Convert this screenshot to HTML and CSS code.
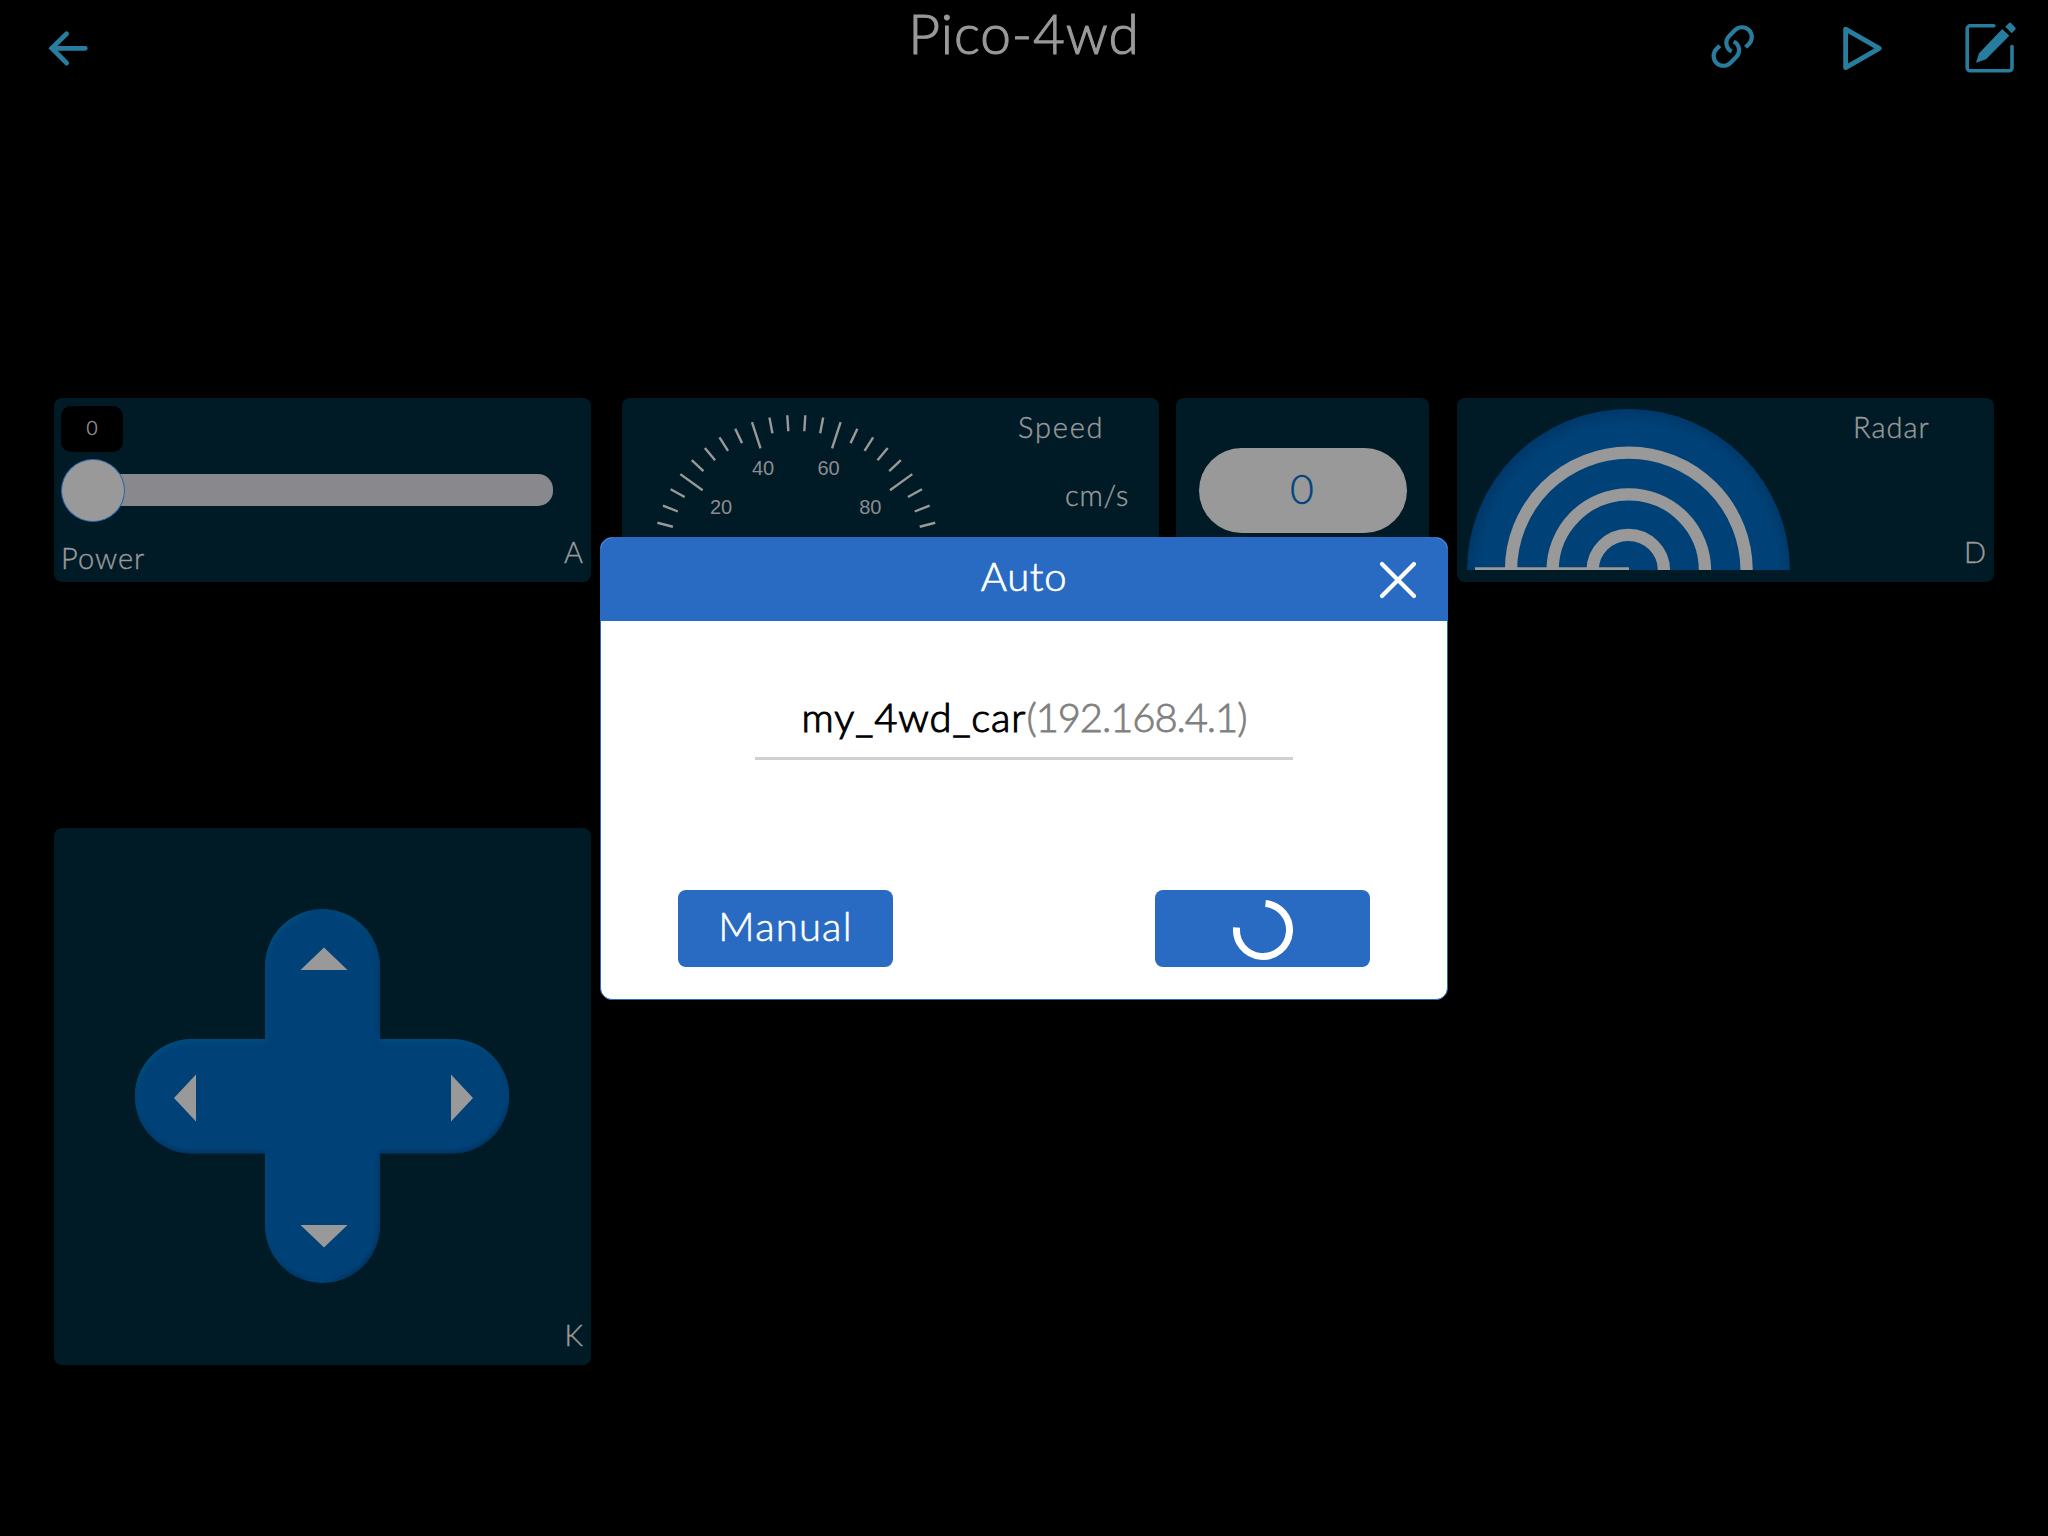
FILE: index.html
```html
<!DOCTYPE html>
<html lang="en">
<head>
<meta charset="utf-8">
<title>Pico-4wd</title>
<link rel="stylesheet" href="styles.css">
</head>
<body>
<header class="topbar">
  <svg class="icon" viewBox="0 0 52 52"><path d="M23.6 12.7 8.8 27.3 23.6 42M8.8 27.3H42.3" stroke-width="4.8" stroke-linecap="round"/></svg>
  <h1 class="title">Pico-4wd</h1>
  <nav class="actions">
    <svg class="icon" viewBox="0 0 52 52"><path d="M36.6 26.2 39.9 22.9A9.7 9.7 0 0 0 26.1 9.1L20.4 14.8A9.7 9.7 0 0 0 22.7 30.5M10.8 24.8 7.5 28.1A9.7 9.7 0 0 0 21.3 41.9L27 36.2A9.7 9.7 0 0 0 24.7 20.5" stroke-width="4.2"/></svg>
    <svg class="icon" viewBox="0 0 52 52"><path d="M8.6 8.2V46.7L42.3 27.4Z" stroke-width="4.8" stroke-linejoin="round"/></svg>
    <svg class="icon" viewBox="0 0 52 52"><path d="M28.8 4.8H5.2a3 3 0 0 0-3 3V46.8a3 3 0 0 0 3 3H44a3 3 0 0 0 3-3V25.5" stroke-width="3.6" stroke-linecap="round"/><path class="solid" d="M37.3 8 44.3 14.7 21 38.3 11 41.7 14 32.3ZM40.3 5.7 43.8 2.2Q45 1 46.2 2.2L50.2 6.4Q51.4 7.6 50.2 8.8L46.7 12.2Z"/></svg>
  </nav>
</header>

<main class="board">
  <section class="card power">
    <output class="badge">0</output>
    <div class="slider"><i class="track"></i><i class="knob"></i></div>
    <span class="label name">Power</span>
    <span class="label key">A</span>
  </section>

  <section class="card speed">
    <svg class="gauge" viewBox="0 0 350 184">
      <g class="ticks" transform="translate(174.300 160.400)">
        <path d="M0-143.4V-127.4" transform="rotate(-75.6)"/><path d="M0-143.4V-127.4" transform="rotate(-68.4)"/><path d="M0-143.4V-127.4" transform="rotate(-61.2)"/><path d="M0-143.4V-115.8" transform="rotate(-54)"/><path d="M0-143.4V-127.4" transform="rotate(-46.8)"/><path d="M0-143.4V-127.4" transform="rotate(-39.6)"/><path d="M0-143.4V-127.4" transform="rotate(-32.4)"/><path d="M0-143.4V-127.4" transform="rotate(-25.2)"/><path d="M0-143.4V-115.8" transform="rotate(-18)"/><path d="M0-143.4V-127.4" transform="rotate(-10.8)"/><path d="M0-143.4V-127.4" transform="rotate(-3.6)"/><path d="M0-143.4V-127.4" transform="rotate(3.6)"/><path d="M0-143.4V-127.4" transform="rotate(10.8)"/><path d="M0-143.4V-115.8" transform="rotate(18)"/><path d="M0-143.4V-127.4" transform="rotate(25.2)"/><path d="M0-143.4V-127.4" transform="rotate(32.4)"/><path d="M0-143.4V-127.4" transform="rotate(39.6)"/><path d="M0-143.4V-127.4" transform="rotate(46.8)"/><path d="M0-143.4V-115.8" transform="rotate(54)"/><path d="M0-143.4V-127.4" transform="rotate(61.2)"/><path d="M0-143.4V-127.4" transform="rotate(68.4)"/><path d="M0-143.4V-127.4" transform="rotate(75.6)"/>
      </g>
      <g class="marks">
        <text x="99" y="115.500">20</text><text x="141" y="76.500">40</text><text x="206.600" y="76.500">60</text><text x="248.300" y="115.500">80</text>
      </g>
    </svg>
    <div class="captions">
      <span class="label cap-name">Speed</span>
      <span class="label cap-unit">cm/s</span>
    </div>
  </section>

  <section class="card value"><output class="pill">0</output></section>

  <section class="card radar">
    <svg class="dome" viewBox="0 0 323 161">
      <defs><radialGradient id="domeFill" gradientUnits="userSpaceOnUse" cx="163" cy="163" r="163"><stop offset=".9" stop-color="#004278"/><stop offset="1" stop-color="#00386a"/></radialGradient></defs>
      <circle cx="161.5" cy="161.5" r="161.5" fill="url(#domeFill)"/>
      <g class="rings"><circle cx="161.8" cy="161.5" r="117.8"/><circle cx="161.8" cy="161.5" r="76.2"/><circle cx="161.3" cy="161.5" r="35.7"/></g>
      <path class="sweep" d="M8 158.2H162V161H8Z"/>
    </svg>
    <span class="label cap-name">Radar</span>
    <span class="label key">D</span>
  </section>

  <section class="card pad">
    <svg class="cross" viewBox="0 0 374 374">
      <defs>
        <filter id="bevel" x="0" y="0" width="1" height="1" color-interpolation-filters="sRGB">
          <feComponentTransfer in="SourceAlpha" result="inv"><feFuncA type="linear" slope="-1" intercept="1"/></feComponentTransfer>
          <feGaussianBlur in="inv" stdDeviation="2.5" result="b"/>
          <feOffset in="b" dx="-1" dy="-2" result="lo"/>
          <feOffset in="b" dx="1" dy="2" result="hi"/>
          <feFlood flood-color="#002850" flood-opacity=".7"/><feComposite in2="lo" operator="in" result="dark"/><feComposite in="dark" in2="SourceAlpha" operator="in" result="dark2"/>
          <feFlood flood-color="#005a85" flood-opacity=".7"/><feComposite in2="hi" operator="in" result="light"/><feComposite in="light" in2="SourceAlpha" operator="in" result="light2"/>
          <feMerge><feMergeNode in="SourceGraphic"/><feMergeNode in="light2"/><feMergeNode in="dark2"/></feMerge>
        </filter>
      </defs>
      <path filter="url(#bevel)" fill="#004278" d="M130 57.500A57.500 57.500 0 0 1 245 57.500V130H317A57.200 57.200 0 0 1 317 244.500H245V316.500A57.500 57.500 0 0 1 130 316.500V244.500H57A57.200 57.200 0 0 1 57 130H130Z"/>
      <path fill="#999" d="M189 38.500 212.500 61H165.500ZM39 189 61 165.500V212.500ZM338 189 316 165.500V212.500ZM189 338.500 212.500 316H165.500Z"/>
    </svg>
    <span class="label key">K</span>
  </section>
</main>

<div class="dialog" role="dialog">
  <div class="dialog-head">
    <h2 class="dialog-title">Auto</h2>
    <svg class="close" viewBox="0 0 40 40"><path d="M4 4 36 36M36 4 4 36"/></svg>
  </div>
  <div class="dialog-body">
    <div class="device"><span class="device-name">my_4wd_car</span><span class="device-ip">(192.168.4.1)</span></div>
    <div class="buttons">
      <button class="btn"><span class="btn-text">Manual</span></button>
      <button class="btn"><svg class="spinner" viewBox="0 0 60 60"><path d="M32.500 3.600A26.500 26.500 0 1 1 3.600 27.500"/></svg></button>
    </div>
  </div>
</div>
</body>
</html>
```
FILE: styles.css
```css
* { box-sizing: border-box; margin: 0; padding: 0; }
body {
  width: 2048px; height: 1536px; overflow: hidden; background: #000; color: #999;
  font-family: Lato, "Open Sans", sans-serif; font-weight: 300; position: relative;
  -webkit-text-stroke: 0.4px currentColor;
}
svg { display: block; }
.topbar { display: grid; grid-template-columns: 1fr auto 1fr; height: 398px; padding: 0 31px 0 43px; align-items: start; }
.icon { width: 52px; height: 52px; margin-top: 21px; fill: none; stroke: #267d9e; }
.icon .solid { fill: #267d9e; stroke: none; }
.title { font-size: 55px; line-height: 67px; font-weight: 300; letter-spacing: 0.9px; margin-left: -12px; -webkit-text-stroke-width: 1.1px; }
.actions { display: flex; gap: 76px; justify-content: flex-end; }

.board { display: grid; grid-template-columns: 537px 537px 253px 537px; grid-template-rows: 184px 537px; row-gap: 246px; padding-left: 54px; }
.card { background: #001a26; border-radius: 8px; height: 100%; }
.speed { margin-left: 31px; width: 537px; }
.value { margin-left: 48px; width: 253px; }
.radar { margin-left: 76px; width: 537px; }
.label { font-size: 29px; line-height: 36px; letter-spacing: 1px; }
.key { letter-spacing: 0; }

.power { display: grid; grid-template-columns: 1fr auto; grid-template-rows: 61px 63px 1fr; padding: 0 8px 0 7px; }
.badge { width: 62px; height: 46px; margin-top: 8px; border-radius: 10px; background: #000; font-size: 19px; line-height: 43px; text-align: center; }
.slider { grid-row: 2; grid-column: 1 / 3; display: flex; align-items: flex-start; }
.track { order: 2; width: 460px; height: 32px; margin: 15px 0 0 -32px; border-radius: 15px; background: #89898d; }
.knob { order: 1; width: 64px; height: 63px; border-radius: 50%; background: #999; border: 1px solid #2564ad; position: relative; z-index: 1; }
.power .name { grid-row: 3; padding-top: 18px; }
.power .key { grid-row: 3; padding-top: 12px; }

.speed, .radar { display: flex; }
.gauge { width: 350px; height: 184px; }
.ticks { stroke: #999; stroke-width: 2.4; }
.marks { fill: #8a8d90; font: 20px "Liberation Sans", sans-serif; text-anchor: middle; -webkit-text-stroke-width: 0; }
.captions { display: flex; flex-direction: column; flex: 1; padding-top: 11px; }
.speed .cap-name { padding-left: 46px; letter-spacing: 1.8px; }
.speed .cap-unit { padding-left: 93px; margin-top: 32px; letter-spacing: 0.8px; }

.value { display: flex; justify-content: center; padding-top: 50px; }
.pill { width: 208px; height: 85px; margin-right: -1px; padding-right: 2px; border-radius: 43px; background: #999; color: #004480; text-align: center; font-size: 41px; line-height: 82px; }

.dome { width: 323px; height: 161px; margin: 11px 0 0 10px; }
.rings { fill: none; stroke: #999; stroke-width: 12.3; }
.sweep { fill: #999; }
.radar .cap-name { margin: 11px auto 0 63px; }
.radar .key { align-self: flex-end; margin: 0 8px 12px 0; }

.pad { display: flex; justify-content: space-between; }
.cross { width: 374px; height: 374px; margin: 81px 0 0 81px; }
.pad .key { align-self: flex-end; margin: 0 8px 12px 0; }

.dialog {
  position: absolute; left: 600px; top: 537px; width: 848px; height: 463px;
  background: #fff; border: 1px solid #2a6cc3; border-radius: 12px; overflow: hidden;
}
.dialog-head { display: grid; grid-template-columns: 1fr auto 1fr; height: 83px; background: #296bc2; color: #fff; }
.dialog-title { grid-column: 2; font-size: 40px; font-weight: 300; line-height: 76px; letter-spacing: 0.7px; -webkit-text-stroke-width: 0.7px; }
.close { width: 40px; height: 40px; margin: 22px 29px 0 auto; stroke: #fff; stroke-width: 4.2; stroke-linecap: round; }
.dialog-body { padding: 60px 77px 0; }
.device { width: 538px; height: 79px; margin: 0 auto; border-bottom: 3px solid #d0d0d0; text-align: center; font-size: 40px; line-height: 73px; white-space: nowrap; color: #808080; }
.device-name { color: #000; letter-spacing: 0.9px; -webkit-text-stroke: 1.1px #000; }
.device-ip { letter-spacing: -1.1px; -webkit-text-stroke: 0.8px #808080; }
.buttons { display: flex; justify-content: space-between; margin-top: 130px; }
.btn { width: 215px; height: 77px; border: 0; border-radius: 8px; background: #296bc2; color: #fff; display: flex; justify-content: center; font: 300 40px/73px Lato, "Open Sans", sans-serif; }
.btn-text { letter-spacing: 1.2px; -webkit-text-stroke: 0.6px #fff; }
.spinner { width: 60px; height: 60px; margin-top: 10px; fill: none; stroke: #fff; stroke-width: 7; }
```
